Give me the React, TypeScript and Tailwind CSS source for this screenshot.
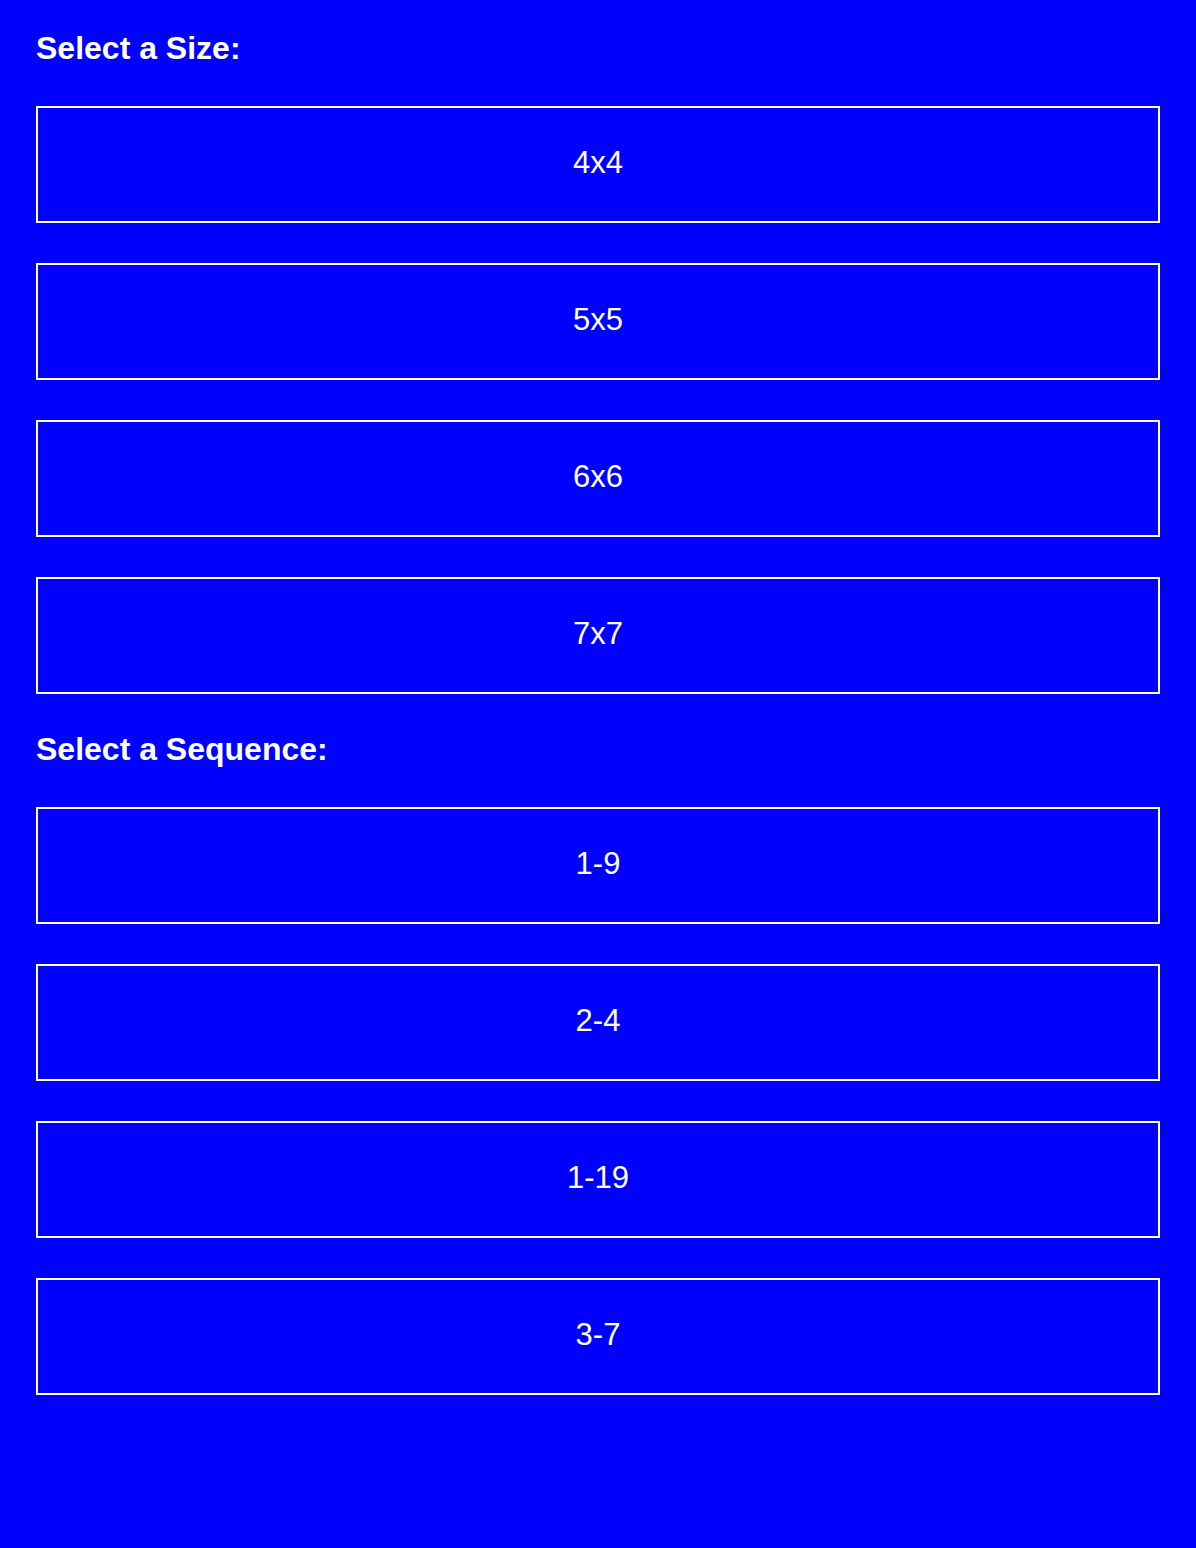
import React from "react";

const sizes = ["4x4", "5x5", "6x6", "7x7"];
const seqs = ["1-9", "2-4", "1-19", "3-7"];

function Btn({ label }: { label: string }) {
  return (
    <button className="flex h-[117px] w-full items-center justify-center border-2 border-white bg-[#0000ff] pb-[2px] text-[31px] text-white">
      {label}
    </button>
  );
}

export default function App() {
  return (
    <div
      className="min-h-screen w-full bg-[#0000ff] px-[36px] pt-[28px] text-white"
      style={{ fontFamily: '"Liberation Sans", Arial, sans-serif' }}
    >
      <h2 className="mb-[38px] text-[32px] font-bold leading-[40px]">Select a Size:</h2>
      <div className="flex flex-col gap-[40px]">
        {sizes.map((s) => (
          <Btn key={s} label={s} />
        ))}
      </div>
      <h2 className="mb-[38px] mt-[35px] text-[32px] font-bold leading-[40px]">Select a Sequence:</h2>
      <div className="flex flex-col gap-[40px]">
        {seqs.map((s) => (
          <Btn key={s} label={s} />
        ))}
      </div>
    </div>
  );
}
